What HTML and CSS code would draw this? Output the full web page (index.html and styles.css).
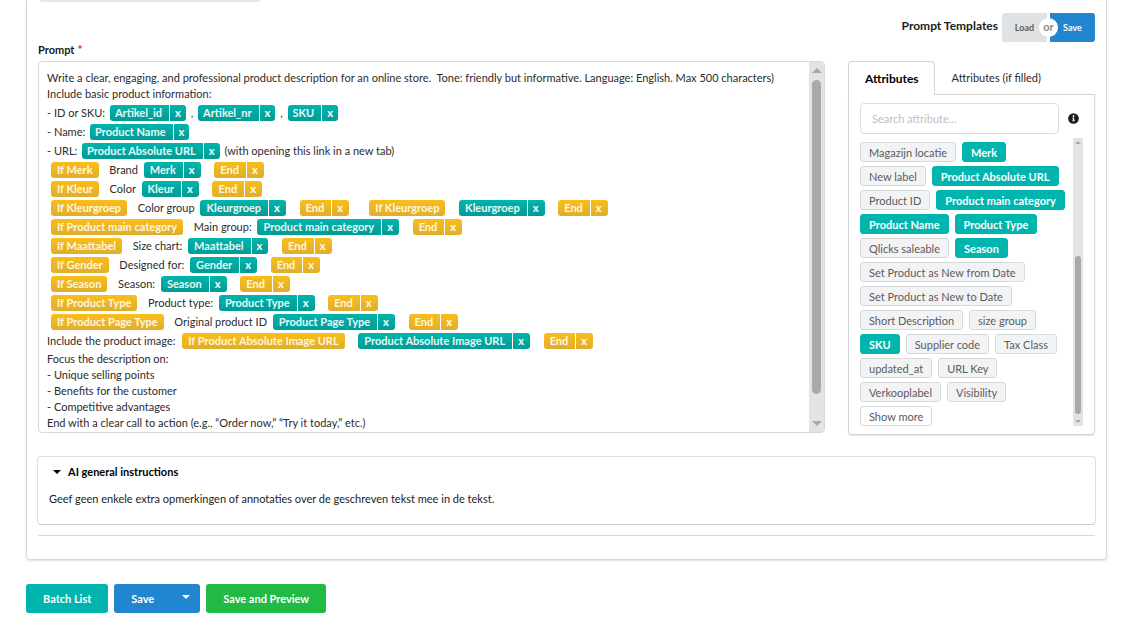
FILE: index.html
```html
<!DOCTYPE html>
<html lang="en">
<head>
	<meta charset="utf-8">
	<title>Prompt</title>
	<link rel="stylesheet" href="styles.css">
</head>
<body>
	<form class="page">
		<div class="segment">
			<div class="prev-field"></div>
			<div class="templates">
				<span class="templates-title">Prompt Templates</span>
				<div class="or-buttons">
					<button type="button" class="load">Load</button>
					<span class="or">or</span>
					<button type="button" class="save">Save</button>
				</div>
			</div>
			<div class="label" id="prompt-label">Prompt<span class="required">*</span></div>
			<div class="columns">
				<div class="editor">
					<div class="editor-text" contenteditable="true" spellcheck="false" role="textbox" aria-multiline="true" aria-labelledby="prompt-label">
						<div class="line">Write a clear, engaging, and professional product description for an online store.&nbsp; Tone: friendly but informative. Language: English. Max 500 characters)</div>
						<div class="line">Include basic product information:</div>
						<div class="tagged">
							<div class="line">- ID or SKU: <span class="tag plain">Artikel_id<b>x</b></span> , <span class="tag plain">Artikel_nr<b>x</b></span> , <span class="tag plain">SKU<b>x</b></span></div>
							<div class="line">- Name: <span class="tag plain">Product Name<b>x</b></span></div>
							<div class="line">- URL: <span class="tag plain">Product Absolute URL<b>x</b></span> (with opening this link in a new tab)</div>
							<div class="line"><span class="tag if">If Merk</span>&nbsp; Brand <span class="tag">Merk<b>x</b></span>&nbsp; <span class="tag if">End<b>x</b></span></div>
							<div class="line"><span class="tag if">If Kleur</span>&nbsp; Color <span class="tag">Kleur<b>x</b></span>&nbsp; <span class="tag if">End<b>x</b></span></div>
							<div class="line"><span class="tag if">If Kleurgroep</span>&nbsp; Color group <span class="tag">Kleurgroep<b>x</b></span>&nbsp; <span class="tag if">End<b>x</b></span>&nbsp; &nbsp; <span class="tag if">If Kleurgroep</span>&nbsp; <span class="tag">Kleurgroep<b>x</b></span>&nbsp; <span class="tag if">End<b>x</b></span></div>
							<div class="line"><span class="tag if">If Product main category</span>&nbsp; Main group: <span class="tag">Product main category<b>x</b></span>&nbsp; <span class="tag if">End<b>x</b></span></div>
							<div class="line"><span class="tag if">If Maattabel</span>&nbsp; Size chart: <span class="tag">Maattabel<b>x</b></span>&nbsp; <span class="tag if">End<b>x</b></span></div>
							<div class="line"><span class="tag if">If Gender</span>&nbsp; Designed for: <span class="tag">Gender<b>x</b></span>&nbsp; <span class="tag if">End<b>x</b></span></div>
							<div class="line"><span class="tag if">If Season</span>&nbsp; Season: <span class="tag">Season<b>x</b></span>&nbsp; <span class="tag if">End<b>x</b></span></div>
							<div class="line"><span class="tag if">If Product Type</span>&nbsp; Product type: <span class="tag">Product Type<b>x</b></span>&nbsp; <span class="tag if">End<b>x</b></span></div>
							<div class="line"><span class="tag if">If Product Page Type</span>&nbsp; Original product ID <span class="tag">Product Page Type<b>x</b></span>&nbsp; <span class="tag if">End<b>x</b></span></div>
							<div class="line">Include the product image: <span class="tag if">If Product Absolute Image URL</span>&nbsp; <span class="tag">Product Absolute Image URL<b>x</b></span>&nbsp; <span class="tag if">End<b>x</b></span></div>
						</div>
						<div class="line">Focus the description on:</div>
						<div class="line">- Unique selling points</div>
						<div class="line">- Benefits for the customer</div>
						<div class="line">- Competitive advantages</div>
						<div class="line">End with a clear call to action (e.g., “Order now,” “Try it today,” etc.)</div>
					</div>
					<div class="scrollbar">
						<i class="arrow up"></i>
						<i class="thumb"></i>
						<i class="arrow down"></i>
					</div>
				</div>
				<div class="attributes">
					<div class="tabs">
						<a href="#attributes" class="active">Attributes</a>
						<a href="#filled">Attributes (if filled)</a>
					</div>
					<div class="tab-body" id="attributes">
						<div class="search">
							<input type="text" placeholder="Search attribute..." aria-label="Search attribute">
							<svg viewBox="0 0 512 512" width="11" height="11" aria-hidden="true">
								<circle cx="256" cy="256" r="248" fill="#1b1c1d"/>
								<path fill="#fff" d="M256 98a42 42 0 1 1 0 84a42 42 0 0 1 0-84zM208 212h80v132h28v44H196v-44h28v-88h-16z"/>
							</svg>
						</div>
						<div class="attr-scroll">
							<div class="chips">
								<button type="button">Magazijn locatie</button>
								<button type="button" class="used">Merk</button>
								<button type="button">New label</button>
								<button type="button" class="used">Product Absolute URL</button>
								<button type="button">Product ID</button>
								<button type="button" class="used">Product main category</button>
								<button type="button" class="used">Product Name</button>
								<button type="button" class="used">Product Type</button>
								<button type="button">Qlicks saleable</button>
								<button type="button" class="used">Season</button>
								<button type="button">Set Product as New from Date</button>
								<button type="button">Set Product as New to Date</button>
								<button type="button">Short Description</button>
								<button type="button">size group</button>
								<button type="button" class="used">SKU</button>
								<button type="button">Supplier code</button>
								<button type="button">Tax Class</button>
								<button type="button">updated_at</button>
								<button type="button">URL Key</button>
								<button type="button">Verkooplabel</button>
								<button type="button">Visibility</button>
								<button type="button" class="more">Show more</button>
							</div>
							<div class="scrollbar small">
								<i class="arrow up"></i>
								<i class="thumb"></i>
								<i class="arrow down"></i>
							</div>
						</div>
					</div>
				</div>
			</div>
			<details class="accordion" open>
				<summary>AI general instructions</summary>
				<p>Geef geen enkele extra opmerkingen of annotaties over de geschreven tekst mee in de tekst.</p>
			</details>
			<hr>
		</div>
		<div class="actions">
			<button type="button" class="teal">Batch List</button>
			<button type="button" class="blue">Save<i class="caret"></i></button>
			<button type="button" class="green">Save and Preview</button>
		</div>
	</form>
</body>
</html>
```
FILE: styles.css
```css
*{
	box-sizing: border-box;
}
body{
	margin: 0;
	background: #fff;
	color: #1b1c1d;
	font: 11px/16px Lato, sans-serif;
}
button, input{
	font-family: inherit;
	font-size: 11px;
}
button{
	border: 0;
	cursor: pointer;
}
.page{
	padding: 0 14px 0 26px;
}
.segment{
	padding: 0 11px 23px;
	border: 1px solid #d8d9da;
	border-top: 0;
	border-radius: 0 0 4px 4px;
	box-shadow: 0 1px 2px rgba(34,36,38,.15);
}
.prev-field{
	width: 220px;
	height: 2px;
	margin-left: 2px;
	background: #e6e6e6;
	border-radius: 0 0 4px 4px;
}

/* templates */
.templates{
	display: flex;
	justify-content: flex-end;
	gap: 4px;
	margin-top: 11px;
}
.templates-title{
	padding-top: 5px;
	font-size: 12px;
	font-weight: 700;
}
.or-buttons{
	display: flex;
	gap: 3px;
	position: relative;
}
.or-buttons button{
	width: 45px;
	height: 29px;
	padding: 0;
	font-size: 9px;
	font-weight: 700;
}
.load{
	background: #e0e1e2;
	color: #5f6061;
	border-radius: 3px 0 0 3px;
}
.save{
	background: #2185d0;
	color: #fff;
	border-radius: 0 3px 3px 0;
}
.or{
	position: absolute;
	top: 5px;
	left: 37px;
	width: 19px;
	height: 19px;
	border-radius: 50%;
	background: #fff;
	color: #8b8b8b;
	font-size: 11px;
	font-weight: 700;
	line-height: 18px;
	text-align: center;
}
.label{
	margin-bottom: 3px;
	font-weight: 700;
}
.required{
	margin-left: 3px;
	color: #db2828;
	font-size: 12px;
	line-height: 12px;
}

/* editor */
.columns{
	display: flex;
	align-items: flex-start;
	gap: 23px;
}
.editor{
	flex: 1;
	display: flex;
	border: 1px solid #d8d9da;
	border-radius: 4px;
	overflow: hidden;
}
.editor-text{
	flex: 1;
	padding: 8px 8px 1px;
	outline: 0;
	color: #2b2c2d;
	white-space: nowrap;
}
.tagged{
	padding: 1px 0;
}
.tagged .line{
	display: flex;
	align-items: center;
	height: 19px;
	white-space: pre;
}
.tag{
	display: inline-flex;
	height: 16px;
	margin: 0 4px 0 3px;
	padding: 0 6px;
	border-radius: 3px;
	background: linear-gradient(#00b5ad, #009c95);
	color: #e8f8f7;
	font-weight: 700;
}
.tag b{
	margin-left: 7px;
	padding-left: 5px;
	border-left: 1px solid #fff;
}
.tag.plain{
	margin: 0 2px;
	padding: 0 5px;
}
.tag.if{
	margin: 0 5px 0 4px;
	background: linear-gradient(#fbbd18, #deae2e);
	color: #fff6e0;
}
.scrollbar{
	display: flex;
	flex-direction: column;
	align-items: center;
	width: 15px;
	padding: 6px 0;
	background: #e3e3e3;
}
.arrow{
	border: 5px solid transparent;
}
.arrow.up{
	border-top: 0;
	border-bottom-color: #a9a9a9;
}
.arrow.down{
	margin-top: auto;
	border-bottom: 0;
	border-top-color: #a9a9a9;
}
.thumb{
	width: 9px;
	height: 314px;
	margin-top: 7px;
	border-radius: 5px;
	background: #a9a9a9;
}

/* attributes */
.attributes{
	width: 247px;
}
.tabs{
	display: flex;
	height: 34px;
	border-bottom: 1px solid #d4d4d5;
}
.tabs a{
	padding: 9px 17px;
	color: #2b2c2d;
	text-decoration: none;
}
.tabs a.active{
	height: 34px;
	padding: 9px 15px 9px 16px;
	border: 1px solid #d4d4d5;
	border-bottom: 0;
	border-radius: 4px 4px 0 0;
	background: #fff;
	color: #000;
	font-size: 12px;
	font-weight: 700;
}
.tab-body{
	padding: 8px 11px;
	border: 1px solid #d4d4d5;
	border-top: 0;
	border-radius: 0 0 4px 4px;
	box-shadow: 0 1px 1px rgba(34,36,38,.12);
}
.search{
	display: flex;
	align-items: center;
	gap: 9px;
}
.search input{
	width: 199px;
	height: 31px;
	padding: 0 11px;
	border: 1px solid #dcddde;
	border-radius: 4px;
	outline: 0;
}
.search input::placeholder{
	color: #bfbfbf;
}
.attr-scroll{
	display: flex;
	justify-content: space-between;
	margin-top: 4px;
}
.chips{
	display: flex;
	flex-wrap: wrap;
	align-content: flex-start;
	gap: 4px 6px;
	width: 210px;
	padding-top: 4px;
}
.chips button{
	height: 20px;
	padding: 0 8px;
	border: 1px solid #d8d9da;
	border-radius: 3px;
	background: #f2f3f5;
	color: #5a5b5c;
}
.chips .used{
	border-color: #00b5ad;
	background: #00b5ad;
	color: #fff;
	font-weight: 700;
}
.chips .more{
	background: #fff;
}
.scrollbar.small{
	width: 10px;
	padding: 3px 0;
}
.small .arrow{
	border-width: 3px;
}
.small .arrow.up{
	border-top: 0;
}
.small .arrow.down{
	border-bottom: 0;
}
.small .thumb{
	width: 6px;
	height: 158px;
	margin-top: 112px;
	border-radius: 3px;
}

/* accordion */
.accordion{
	margin: 21px -1px 0;
	padding: 7px 11px 17px;
	border: 1px solid #dedfe0;
	border-bottom-color: #c9cacb;
	border-radius: 4px;
}
.accordion summary{
	display: flex;
	align-items: center;
	gap: 7px;
	padding-left: 4px;
	list-style: none;
	color: #000;
	font-weight: 700;
}
.accordion summary::before{
	content: "";
	border: 4px solid transparent;
	border-top-color: #000;
	border-bottom: 0;
}
.accordion p{
	margin: 11px 0 0;
}
hr{
	margin: 10px 0 0;
	border: 0;
	border-top: 1px solid #d8d9da;
}

/* buttons */
.actions{
	display: flex;
	gap: 6px;
	padding: 24px 0;
}
.actions button{
	height: 29px;
	padding: 0 17px;
	border-radius: 3px;
	color: #fff;
	font-weight: 700;
}
.teal{
	background: #00b5ad;
}
.actions .blue{
	display: flex;
	align-items: center;
	gap: 28px;
	padding-right: 10px;
	background: #2185d0;
}
.green{
	background: #21ba45;
}
.caret{
	margin-bottom: 4px;
	border: 4px solid transparent;
	border-top-color: #fff;
	border-bottom: 0;
}
```
